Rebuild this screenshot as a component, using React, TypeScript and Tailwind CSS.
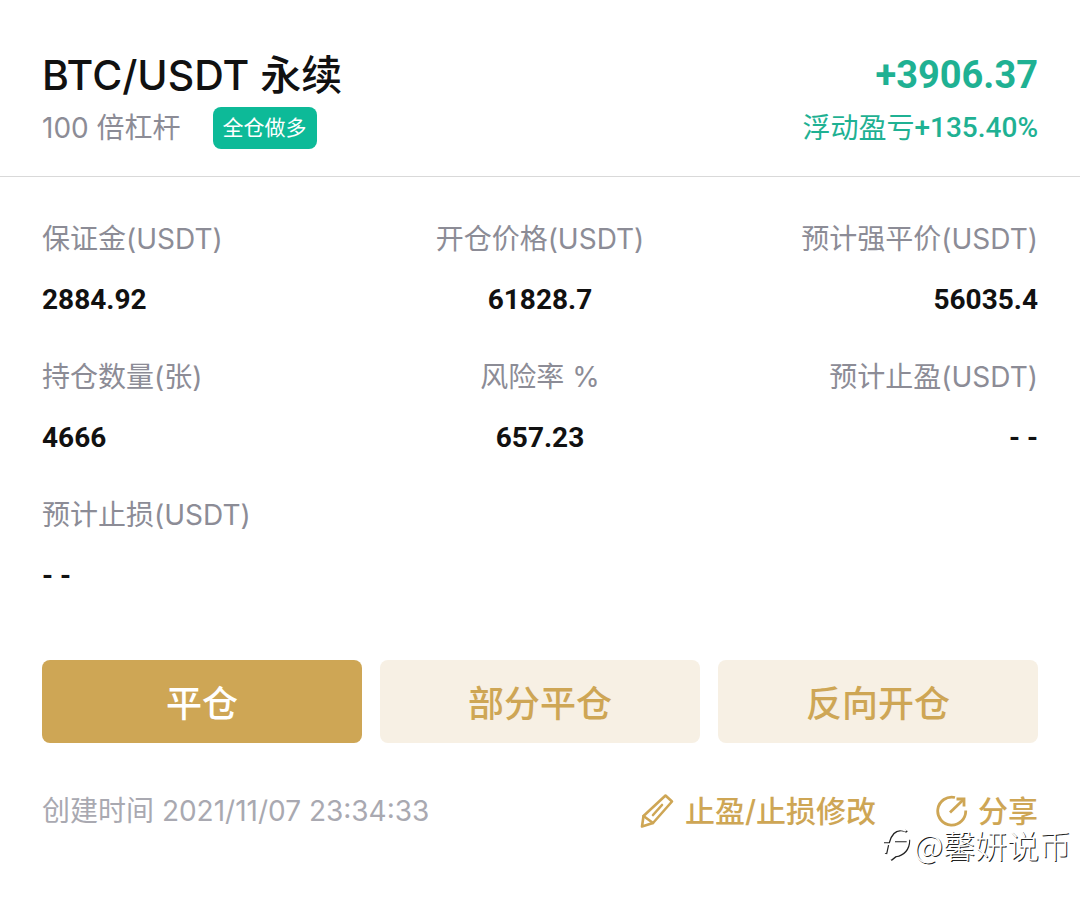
import React from 'react';

type Align = 'left' | 'center' | 'right';

const alignClass: Record<Align, string> = {
  left: 'text-left',
  center: 'text-center',
  right: 'text-right',
};

const stats: { label: string; value: string; align: Align }[] = [
  { label: '保证金(USDT)', value: '2884.92', align: 'left' },
  { label: '开仓价格(USDT)', value: '61828.7', align: 'center' },
  { label: '预计强平价(USDT)', value: '56035.4', align: 'right' },
  { label: '持仓数量(张)', value: '4666', align: 'left' },
  { label: '风险率 %', value: '657.23', align: 'center' },
  { label: '预计止盈(USDT)', value: '- -', align: 'right' },
  { label: '预计止损(USDT)', value: '- -', align: 'left' },
];

function PencilIcon() {
  return (
    <svg width="36" height="36" viewBox="0 0 36 36" fill="none" stroke="currentColor" strokeWidth="2.6" strokeLinejoin="round" strokeLinecap="round" aria-hidden="true">
      <path d="M26.500 2.500 L33 8.500 L14 30 L3 33.500 L4.500 23 Z" />
      <path d="M4.500 23 L14 30" />
      <path d="M23 12 L14 22" />
    </svg>
  );
}

function ShareIcon() {
  return (
    <svg width="32" height="32" viewBox="0 0 32 32" fill="none" stroke="currentColor" strokeWidth="2.800" aria-hidden="true">
      <path d="M19 2.500 A14 14 0 1 0 29.700 15.500" />
      <path d="M14 17.500 L27 5" />
      <path d="M20.500 4 H28 V11.500" />
    </svg>
  );
}

function WatermarkMark({ stroke }: { stroke: string }) {
  return (
    <g stroke={stroke} strokeWidth="2.400">
      <path d="M1 15 H6 C8 8 12 3 18 3 C21 3 23 4 24 5" />
      <path d="M12 14 H26 C26 22 21 28 13 29 L8 33" />
      <path d="M5 18 L3 27" />
    </g>
  );
}

function Watermark() {
  return (
    <div className="pointer-events-none absolute right-[9px] bottom-[36px] flex items-center gap-[2px] text-[32px] leading-[32px] text-white [text-shadow:1px_1px_0px_#222]">
      <svg width="30" height="36" viewBox="0 0 30 36" fill="none" aria-hidden="true">
        <g transform="translate(1 1)">
          <WatermarkMark stroke="#222" />
        </g>
        <WatermarkMark stroke="#fff" />
      </svg>
      <span className="font-['Noto_Sans_CJK_SC',sans-serif] font-light">@馨妍说币</span>
    </div>
  );
}

export default function App() {
  return (
    <main className="relative bg-white pb-[67px] font-[Inter,'Noto_Sans_CJK_SC',sans-serif] text-[#111]">
      <header className="flex items-start justify-between border-b border-[#d9d9d9] px-[42px] pt-[51px] pb-[27px]">
        <div>
          <h1 className="text-[41px] leading-[48px] font-medium">BTC/USDT 永续</h1>
          <div className="mt-2 flex items-center gap-8">
            <span className="text-[28px] leading-[42px] text-[#8c8c96]">100 倍杠杆</span>
            <span className="rounded-lg bg-[#0dba98] px-[10px] text-[21px] leading-[42px] text-white">全仓做多</span>
          </div>
        </div>
        <div className="text-right text-[#1fb193]">
          <p className="font-[Roboto,sans-serif] text-[38px] leading-[48px] font-bold">+3906.37</p>
          <p className="mt-2 flex justify-end text-[28px] leading-[42px]">
            <span>浮动盈亏</span>
            <span className="font-[Roboto,sans-serif] font-medium">+135.40%</span>
          </p>
        </div>
      </header>

      <dl className="grid grid-cols-3 gap-y-[37px] px-[42px] pt-[42px]">
        {stats.map((s) => (
          <div key={s.label} className={alignClass[s.align]}>
            <dt className="text-[28px] leading-[40px] whitespace-nowrap text-[#8c8c96]">{s.label}</dt>
            <dd className="mt-[21px] font-[Roboto,sans-serif] text-[28px] leading-[40px] font-bold">{s.value}</dd>
          </div>
        ))}
      </dl>

      <div className="mt-[64px] grid grid-cols-3 gap-[18px] px-[42px] font-['Noto_Sans_CJK_SC',sans-serif] text-[36px] leading-[83px] font-medium">
        <button type="button" className="rounded-lg bg-[#cea655] text-white">平仓</button>
        <button type="button" className="rounded-lg bg-[#f7f0e4] text-[#cea655]">部分平仓</button>
        <button type="button" className="rounded-lg bg-[#f7f0e4] text-[#cea655]">反向开仓</button>
      </div>

      <footer className="mt-12 flex items-center justify-between px-[42px] leading-[40px]">
        <p className="text-[28px] text-[#a9a9b1]">创建时间 2021/11/07 23:34:33</p>
        <div className="flex gap-[60px] text-[30px] font-medium text-[#cea655]">
          <button type="button" className="flex items-center gap-[10px]">
            <PencilIcon />
            止盈/止损修改
          </button>
          <button type="button" className="flex items-center gap-[10px]">
            <ShareIcon />
            分享
          </button>
        </div>
      </footer>
      <Watermark />
    </main>
  );
}
